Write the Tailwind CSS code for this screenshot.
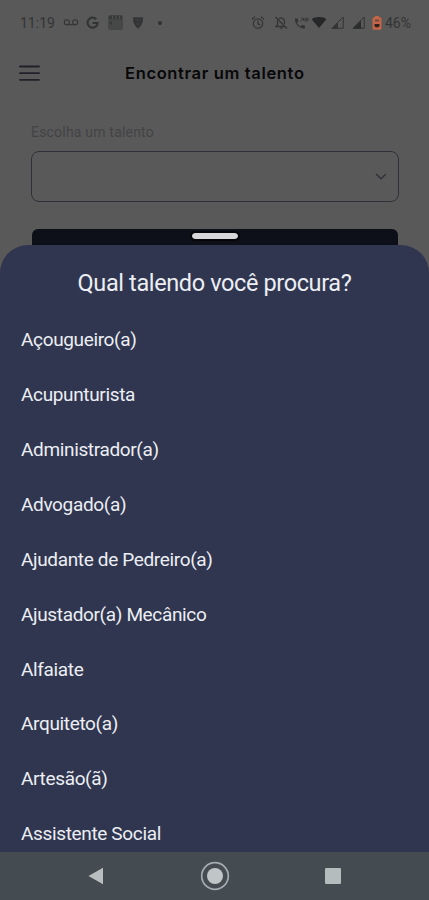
<!DOCTYPE html>
<html lang="pt-BR">
<head>
<meta charset="utf-8">
<meta name="viewport" content="width=device-width, initial-scale=1">
<title>Encontrar um talento</title>
<script src="https://cdn.jsdelivr.net/npm/@tailwindcss/browser@4"></script>
</head>
<body class="bg-[#595959] font-['Roboto',sans-serif]">
<div class="flex h-[900px] w-[429px] flex-col overflow-hidden">
  <div class="flex h-[245px] shrink-0 flex-col">
    <header class="flex h-[46px] shrink-0 items-center pl-5 text-[#333435]">
      <span class="w-[43px] shrink-0 whitespace-nowrap text-[14px]">11:19</span>
      <svg class="h-4 w-[16px] shrink-0" viewBox="0 0 16 16" fill="none" stroke="currentColor" stroke-width="1.1"><circle cx="3.800" cy="7.200" r="2.500"/><circle cx="12.200" cy="7.200" r="2.500"/><path d="M3.800 9.700h8.400"/></svg>
      <svg class="ml-[7px] h-4 w-[13px] shrink-0" viewBox="0 0 13 16" fill="none" stroke="currentColor" stroke-width="2.200"><path d="M10.200 4.200A5 5 0 1 0 11.600 8H6.600"/></svg>
      <svg class="ml-[9px] h-4 w-[15px] shrink-0" viewBox="0 0 15 16"><rect width="15" height="15" rx="2" fill="#464747"/><path d="M1 .8h13v3.400H1z" fill="#383939"/><path d="M4.500 1v3M8 1v3M11.500 1v3" stroke="#505151"/><path d="M1.500 7.500l2-1.500v4z" fill="#303131"/></svg>
      <svg class="ml-[9px] h-4 w-[12px] shrink-0" viewBox="0 0 12 16" fill="currentColor"><path d="M1 2.300h10c0 5.400-1.100 8.200-5 11.400C2.100 10.500 1 7.700 1 2.300z"/><path d="M3.500 4.500l2.500 1.300 2.500-1.300M4.300 8l1.700 2 1.700-2" fill="none" stroke="#454545" stroke-width=".8"/></svg>
      <span class="ml-[14px] size-[4px] rounded-full bg-[#303132]"></span>
      <svg class="ml-[89px] h-4 w-[14px] shrink-0" viewBox="0 0 14 16" fill="none" stroke="currentColor" stroke-width="1.200"><circle cx="7" cy="8.500" r="4.700"/><path d="M7 5.500v3.300l2.200 1.200M1 4.300l3-2.500M13 4.300l-3-2.500"/></svg>
      <svg class="ml-[9px] h-4 w-[14px] shrink-0" viewBox="0 0 14 16" fill="none" stroke="currentColor" stroke-width="1.300"><path d="M1.500 2l11.500 11.500M3.500 5.500v4.500l-1.500 1.500h8.500M5 3.800C8 1.700 10.500 4 10.500 7v2M5.800 13.200h2.500"/></svg>
      <svg class="ml-[6px] h-4 w-[15px] shrink-0" viewBox="0 0 15 16"><path d="M1 3.500h2.800l.6 3-1.500 1.300c1 1.700 2 2.700 3.700 3.700l1.300-1.500 3 .6v2.800C5.500 14 .5 9 1 3.500z" fill="currentColor"/><path d="M6.500 6.500l2.800-3M7 3.300h2.500v2.500M11 3.300h1.700v2.700H11zM14 2.500v3.500" fill="none" stroke="currentColor" stroke-width=".8"/></svg>
      <svg class="ml-[2px] h-4 w-[16px] shrink-0" viewBox="0 0 16 16"><path d="M.8 4.500C2.500 1.300 13.500 1.300 15.200 4.500L8 13z" fill="#262728"/></svg>
      <svg class="ml-[4px] h-4 w-[13px] shrink-0" viewBox="0 0 13 16"><path d="M1 13.200L12.200 2v11.200z" fill="none" stroke="currentColor"/><path d="M.8 13.700L7 7.500v6.200z" fill="currentColor"/></svg>
      <svg class="ml-[8px] h-4 w-[13px] shrink-0" viewBox="0 0 13 16"><path d="M1 13.200L12.200 2v11.200z" fill="none" stroke="currentColor"/><path d="M.8 13.700L9 5.500v8.200z" fill="#2b2c2d"/></svg>
      <svg class="ml-[7px] h-4 w-[10px] shrink-0" viewBox="0 0 10 16"><path d="M3 1h4v1.200h1a1.500 1.500 0 0 1 1.500 1.500v9.600a1.500 1.500 0 0 1-1.500 1.500H2a1.500 1.500 0 0 1-1.500-1.500V3.700A1.500 1.500 0 0 1 2 2.200h1z" fill="#c46548"/><path d="M3 4.500h4v2H3z" fill="#6b4a40"/><path d="M2.500 9h5v2l-1 1.200h-3l-1-1.200z" fill="#30211f"/></svg>
      <span class="ml-[3px] whitespace-nowrap text-[14px]">46%</span>
    </header>
    <div class="flex h-[54px] shrink-0 items-center pl-[19px]">
      <svg class="h-4 w-[21px] shrink-0" viewBox="0 0 21 16" stroke="#20212a" stroke-width="1.800" stroke-linecap="round"><path d="M1 1.500h19M1 8.200h19M1 14.800h19"/></svg>
      <h1 class="ml-[85px] whitespace-nowrap font-['Inter',sans-serif] text-[16.500px] font-semibold tracking-[0.650px] text-[#08080a]">Encontrar um talento</h1>
    </div>
    <div class="flex shrink-0 flex-col pl-[31px] pr-[30px] pt-[22px]">
      <label class="h-[29px] text-[14px] leading-[20px] tracking-[0.200px] text-[#434345]">Escolha um talento</label>
      <div class="flex h-[51px] items-center justify-end rounded-lg border border-[#303138] pr-[11px]">
        <svg class="h-[7px] w-[12px]" viewBox="0 0 12 7" fill="none" stroke="#303137" stroke-width="1.300"><path d="M1 1l5 4.800L11 1"/></svg>
      </div>
      <div class="mx-px mt-[27px] flex h-[16px] justify-center rounded-t-md bg-[#0d1018] pt-[4px]">
        <span class="h-[6px] w-[46px] rounded-full bg-[#d7d7d9] outline-2 outline-[#050608]"></span>
      </div>
    </div>
  </div>
  <main class="flex h-[607px] shrink-0 flex-col overflow-hidden rounded-t-[28px] bg-[#30364f] text-[#eceef4]">
    <h2 class="h-[68px] shrink-0 whitespace-nowrap pt-[22px] text-center text-[23.500px] leading-[32px] tracking-[-0.380px]">Qual talendo você procura?</h2>
    <ul class="pl-[21px] text-[19px] tracking-[-0.350px]">
      <li class="flex h-[54.900px] items-center">Açougueiro(a)</li>
      <li class="flex h-[54.900px] items-center">Acupunturista</li>
      <li class="flex h-[54.900px] items-center">Administrador(a)</li>
      <li class="flex h-[54.900px] items-center">Advogado(a)</li>
      <li class="flex h-[54.900px] items-center">Ajudante de Pedreiro(a)</li>
      <li class="flex h-[54.900px] items-center">Ajustador(a) Mecânico</li>
      <li class="flex h-[54.900px] items-center">Alfaiate</li>
      <li class="flex h-[54.900px] items-center">Arquiteto(a)</li>
      <li class="flex h-[54.900px] items-center">Artesão(ã)</li>
      <li class="flex h-[54.900px] items-center">Assistente Social</li>
    </ul>
  </main>
  <nav class="flex h-[48px] shrink-0 items-center justify-between bg-[#444c52] px-[88px]">
    <svg class="h-[18px] w-[16px]" viewBox="0 0 16 18" fill="#b9bfc1"><path d="M.5 9L15 .8v16.400z"/></svg>
    <svg class="size-[30px]" viewBox="0 0 30 30"><circle cx="15" cy="15" r="13.300" fill="none" stroke="#a5acaf" stroke-width="1.700"/><circle cx="15" cy="15" r="8" fill="#c0c6c7"/></svg>
    <span class="size-[16px] rounded-[1px] bg-[#b5bcbd]"></span>
  </nav>
</div>
</body>
</html>
